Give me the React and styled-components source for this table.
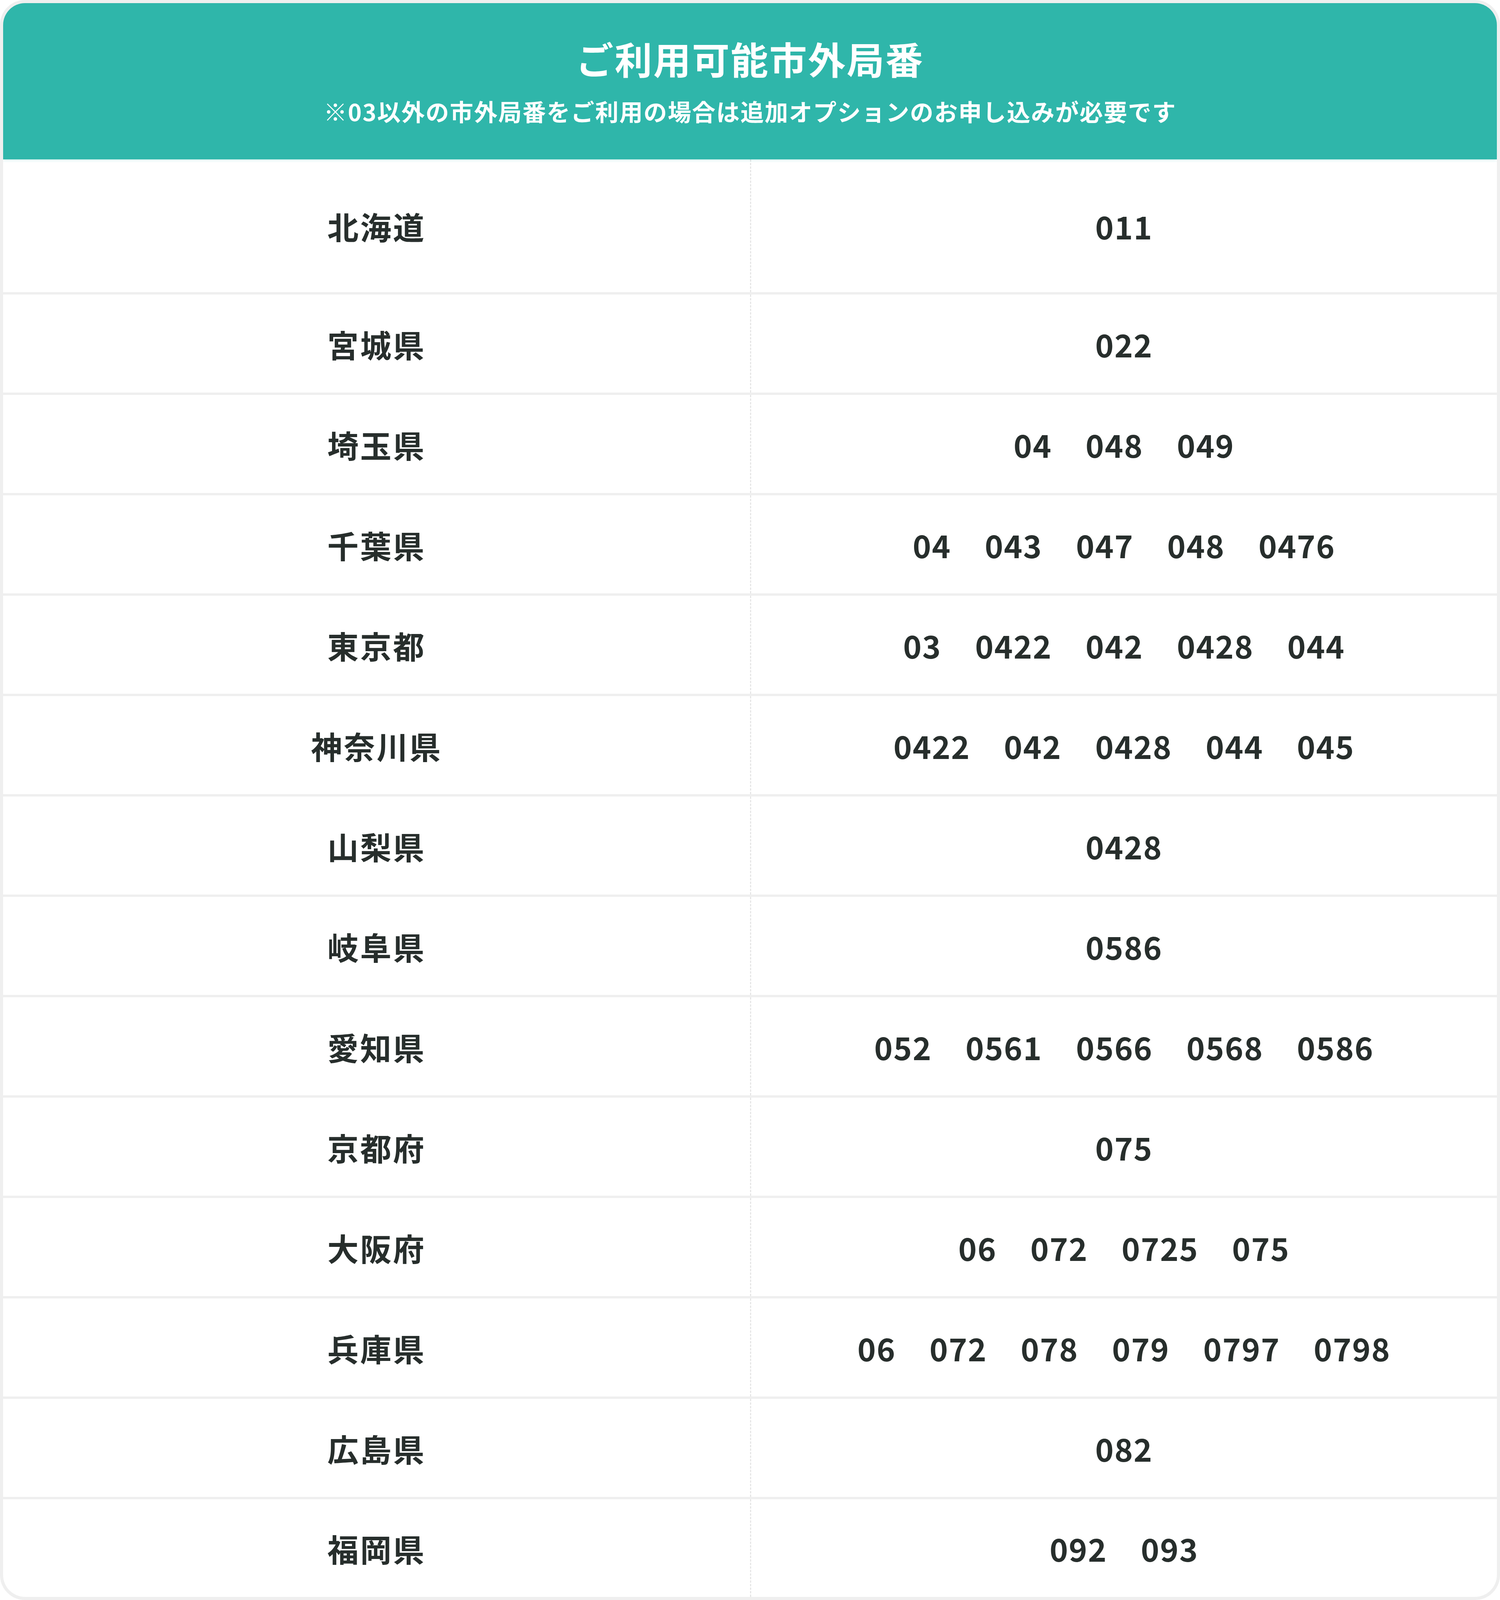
import React from "react";
import styled, { createGlobalStyle } from "styled-components";

/* The browser window here is 3840×4096, so the vertical spacing of the
   5092px-tall reference is compressed to keep every row on screen;
   widths, fonts and horizontal positions follow the reference exactly. */

const GlobalStyle = createGlobalStyle`
  html, body {
    margin: 0;
    padding: 0;
    background: #ffffff;
  }
  body {
    font-family: "Noto Sans CJK JP", "Noto Sans", sans-serif;
    color: #272e2c;
  }
  * { box-sizing: border-box; }
`;

const Card = styled.section`
  width: 3840px;
  border: 8px solid #efefef;
  border-radius: 64px;
  overflow: hidden;
  background: #efefef;
`;

const Header = styled.header`
  position: relative;
  z-index: 1;
  height: 400px;
  background: #2fb6aa;
  color: #ffffff;
  padding: 69px 0 79px;
  display: flex;
  flex-direction: column;
  align-items: center;
  gap: 18px;
  box-shadow: 0 3px 6px rgba(47, 182, 170, 0.18);
`;

const Title = styled.h1`
  margin: 0;
  font-size: 96px;
  line-height: 144px;
  font-weight: 700;
  letter-spacing: 3px;
`;

const Note = styled.p`
  margin: 0;
  font-size: 60px;
  line-height: 90px;
  font-weight: 700;
  letter-spacing: 2px;
`;

const Table = styled.div`
  display: flex;
  flex-direction: column;
  gap: 6px;
`;

const Row = styled.div`
  display: grid;
  grid-template-columns: 1fr 1fr;
  background: #ffffff;
  height: 251px;
  &:first-child { height: 340px; }
  &:last-child { height: 250px; }
`;

const Pref = styled.div`
  display: flex;
  align-items: center;
  justify-content: center;
  font-size: 80px;
  line-height: 1;
  font-weight: 700;
  letter-spacing: 4px;
`;

const Codes = styled.div`
  display: flex;
  align-items: center;
  justify-content: center;
  gap: 86px;
  border-left: 3px dashed #e6e6e6;
`;

const Code = styled.span`
  font-size: 80px;
  line-height: 1;
  font-weight: 700;
  letter-spacing: 2px;
`;

const data = [
  ["北海道", ["011"]],
  ["宮城県", ["022"]],
  ["埼玉県", ["04", "048", "049"]],
  ["千葉県", ["04", "043", "047", "048", "0476"]],
  ["東京都", ["03", "0422", "042", "0428", "044"]],
  ["神奈川県", ["0422", "042", "0428", "044", "045"]],
  ["山梨県", ["0428"]],
  ["岐阜県", ["0586"]],
  ["愛知県", ["052", "0561", "0566", "0568", "0586"]],
  ["京都府", ["075"]],
  ["大阪府", ["06", "072", "0725", "075"]],
  ["兵庫県", ["06", "072", "078", "079", "0797", "0798"]],
  ["広島県", ["082"]],
  ["福岡県", ["092", "093"]],
];

export default function App() {
  return (
    <>
      <GlobalStyle />
      <Card>
        <Header>
          <Title>ご利用可能市外局番</Title>
          <Note>※03以外の市外局番をご利用の場合は追加オプションのお申し込みが必要です</Note>
        </Header>
        <Table>
          {data.map(([pref, codes]) => (
            <Row key={pref}>
              <Pref>{pref}</Pref>
              <Codes>
                {codes.map((c) => (
                  <Code key={c}>{c}</Code>
                ))}
              </Codes>
            </Row>
          ))}
        </Table>
      </Card>
    </>
  );
}
